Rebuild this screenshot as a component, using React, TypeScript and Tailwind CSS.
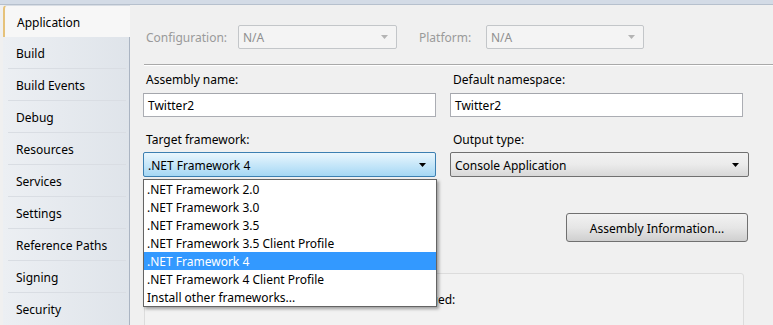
import React from "react";

const tabs = [
  "Application",
  "Build",
  "Build Events",
  "Debug",
  "Resources",
  "Services",
  "Settings",
  "Reference Paths",
  "Signing",
  "Security",
];

const frameworks = [
  ".NET Framework 2.0",
  ".NET Framework 3.0",
  ".NET Framework 3.5",
  ".NET Framework 3.5 Client Profile",
  ".NET Framework 4",
  ".NET Framework 4 Client Profile",
  "Install other frameworks...",
];

function Arrow({ color }: { color: string }) {
  return (
    <svg width="7" height="4" viewBox="0 0 7 4" className="shrink-0">
      <path d="M0 0 L7 0 L3.5 4 Z" fill={color} />
    </svg>
  );
}

export default function App() {
  return (
    <div
      className="w-[773px] h-[325px] overflow-hidden bg-[#f0f0f0] text-[12px] text-black flex flex-col"
      style={{ fontFamily: '"Noto Sans", "Open Sans", sans-serif' }}
    >
      <div className="h-[5px] shrink-0 bg-[#d3dbe6] border-b border-[#b6c0cd]" />
      <div className="flex flex-1 min-h-0">
        {/* Sidebar */}
        <div className="w-[130px] shrink-0 flex flex-col pl-[3px] bg-[#f0f0f0]">
          {tabs.map((t, i) =>
            i === 0 ? (
              <div
                key={t}
                className="h-[32px] flex items-center pl-[12px] pt-[2px] bg-[#f7f7f7] border-l-[2px] border-t border-[#e6c27a] border-t-[#d8dde4] rounded-tl-[4px] relative z-10"
              >
                {t}
              </div>
            ) : (
              <div
                key={t}
                className="h-[32px] flex items-center bg-gradient-to-r from-[#eceff3] to-[#dfe4ea] border-r border-[#aab4c2] pl-[5px] pr-[3px]"
              >
                <div
                  className={
                    "flex-1 h-full flex items-center pl-[8px] pt-[2px] " +
                    (i < tabs.length - 1 ? "border-b border-[#d9dde3]" : "")
                  }
                >
                  {t}
                </div>
              </div>
            )
          )}
        </div>

        {/* Main */}
        <div className="flex-1 relative pl-[13px] pt-[20px]">
          <div className="flex items-center h-[24px]">
            <span className="ml-[3px] w-[92px] pt-[2px] text-[#9a9a9a]">Configuration:</span>
            <div className="w-[159px] h-[24px] border border-[#c3c6c9] rounded-[2px] bg-[#f4f4f4] flex items-center justify-between pl-[4px] pr-[8px] text-[#8f8f8f]">
              <span className="pt-[2px]">N/A</span>
              <Arrow color="#b4b4b4" />
            </div>
            <span className="ml-[22px] w-[67px] pt-[2px] text-[#9a9a9a]">Platform:</span>
            <div className="w-[158px] h-[24px] border border-[#c3c6c9] rounded-[2px] bg-[#f4f4f4] flex items-center justify-between pl-[4px] pr-[8px] text-[#8f8f8f]">
              <span className="pt-[2px]">N/A</span>
              <Arrow color="#b4b4b4" />
            </div>
          </div>

          <div className="mt-[15px] ml-[1px] h-[2px] border-t border-[#a9a9a9] border-b border-b-white" />

          <div className="flex gap-[14px] mt-[5px]">
            <div className="w-[293px] flex flex-col">
              <span className="ml-[3px] h-[16px] leading-[18px]">Assembly name:</span>
              <div className="mt-[6px] h-[24px] bg-white border border-[#abadb3] border-t-[#a4a6ac] flex items-center pl-[4px] pt-[2px]">
                Twitter2
              </div>
              <span className="ml-[3px] mt-[14px] h-[16px] leading-[18px]">Target framework:</span>
              <div className="mt-[5px] h-[25px] border border-[#3c7fb1] rounded-[2px] bg-gradient-to-b from-[#eaf6fd] via-[#c7e7f9] to-[#a5d7f4] flex items-center justify-between pl-[4px] pr-[9px]">
                <span className="pt-[2px]">.NET Framework 4</span>
                <Arrow color="#000" />
              </div>
            </div>
            <div className="w-[299px] flex flex-col">
              <span className="ml-[3px] h-[16px] leading-[18px]">Default namespace:</span>
              <div className="mt-[6px] w-[293px] h-[24px] bg-white border border-[#abadb3] border-t-[#a4a6ac] flex items-center pl-[4px] pt-[2px]">
                Twitter2
              </div>
              <span className="ml-[3px] mt-[14px] h-[16px] leading-[18px]">Output type:</span>
              <div className="mt-[5px] h-[25px] border border-[#707070] rounded-[2px] bg-gradient-to-b from-[#f2f2f2] via-[#ebebeb] to-[#d8d8d8] flex items-center justify-between pl-[4px] pr-[9px]">
                <span className="pt-[2px]">Console Application</span>
                <Arrow color="#000" />
              </div>
            </div>
          </div>

          <div className="flex justify-end w-[605px] mt-[36px]">
            <button className="w-[182px] h-[29px] border border-[#707070] rounded-[3px] bg-gradient-to-b from-[#f2f2f2] via-[#e6e6e6] to-[#cfcfcf] flex items-center justify-center pt-[2px]">
              Assembly Information...
            </button>
          </div>

          <div className="mt-[31px] ml-[1px] w-[600px] h-[80px] border border-[#dcdcdc] rounded-[3px] bg-[#f2f2f2] pl-[21px] pt-[17px]">
            Specify how application resources will be managed:
          </div>

          {/* Dropdown list */}
          <div className="absolute left-[13px] top-[174px] w-[294px] bg-white border border-[#646464] shadow-[2px_2px_3px_rgba(0,0,0,0.35)] flex flex-col">
            {frameworks.map((f, i) => (
              <div
                key={f}
                className={
                  "h-[18px] leading-[20px] pl-[3px] " +
                  (i === 4 ? "bg-[#3399ff] text-white" : "")
                }
              >
                {f}
              </div>
            ))}
          </div>
        </div>
      </div>
    </div>
  );
}
